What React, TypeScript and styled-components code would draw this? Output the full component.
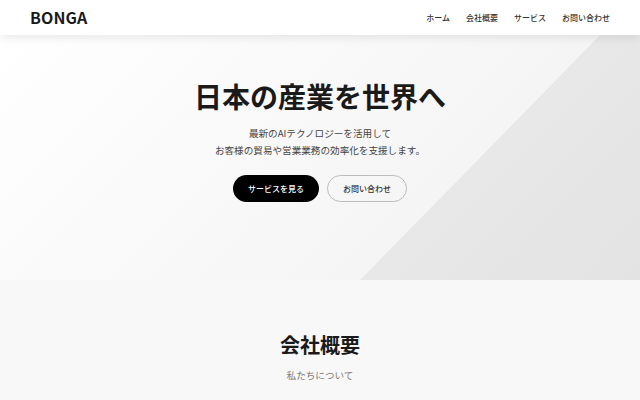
import styled, { createGlobalStyle } from "styled-components";

const GlobalStyle = createGlobalStyle`
  * { box-sizing: border-box; margin: 0; padding: 0; }
  html, body { background: #f8f8f8; overflow: hidden; }
  body { font-family: "Noto Sans CJK JP", "Noto Sans", sans-serif; color: #1a1a1a; }
`;

const Page = styled.div`
  width: 640px;
  height: 400px;
  overflow: hidden;
`;

const Header = styled.header`
  position: relative;
  z-index: 2;
  height: 35px;
  padding: 0 30px;
  display: flex;
  align-items: center;
  justify-content: space-between;
  background: #fff;
  box-shadow: 0 2px 10px rgba(0, 0, 0, 0.1);
`;

const Logo = styled.div`
  font-size: 16px;
  font-weight: 700;
  letter-spacing: 0.1px;
  margin-top: -2px;
`;

const Nav = styled.nav`
  display: flex;
  gap: 16px;
`;

const NavLink = styled.a`
  font-size: 8px;
  font-weight: 500;
  color: #333;
`;

const Hero = styled.section`
  position: relative;
  height: 245px;
  display: flex;
  flex-direction: column;
  align-items: center;
  background: linear-gradient(135deg, #ffffff 0%, #f0f0f0 100%);
  overflow: hidden;

  &::before {
    content: "";
    position: absolute;
    inset: 0;
    background: rgba(0, 0, 0, 0.05);
    clip-path: polygon(600px 0, 100% 0, 100% 100%, 360px 100%);
  }
`;

const HeroTitle = styled.h1`
  position: relative;
  margin-top: 37px;
  font-size: 28px;
  line-height: 48px;
  font-weight: 700;
  white-space: nowrap;
`;

const HeroText = styled.p`
  position: relative;
  margin-top: 5px;
  font-size: 9.6px;
  line-height: 17.3px;
  color: #444;
  text-align: center;
`;

const Buttons = styled.div`
  position: relative;
  margin-top: 15px;
  display: flex;
  gap: 8px;
`;

const Button = styled.a<{ $primary?: boolean }>`
  width: ${(p) => (p.$primary ? "86px" : "80px")};
  height: 27px;
  display: flex;
  align-items: center;
  justify-content: center;
  border-radius: 14px;
  font-size: 8px;
  font-weight: 500;
  color: ${(p) => (p.$primary ? "#fff" : "#333")};
  background: ${(p) => (p.$primary ? "#000" : "transparent")};
  border: ${(p) => (p.$primary ? "none" : "1px solid #bbb")};
`;

const About = styled.section`
  height: 120px;
  padding-top: 48px;
  display: flex;
  flex-direction: column;
  align-items: center;
  background: #f8f8f8;
`;

const SectionTitle = styled.h2`
  font-size: 20px;
  line-height: 34px;
  font-weight: 700;
`;

const SectionSub = styled.p`
  margin-top: 5px;
  font-size: 9.6px;
  line-height: 16px;
  color: #7a7a7a;
`;

export default function App() {
  return (
    <Page>
      <GlobalStyle />
      <Header>
        <Logo>BONGA</Logo>
        <Nav>
          <NavLink>ホーム</NavLink>
          <NavLink>会社概要</NavLink>
          <NavLink>サービス</NavLink>
          <NavLink>お問い合わせ</NavLink>
        </Nav>
      </Header>
      <Hero>
        <HeroTitle>日本の産業を世界へ</HeroTitle>
        <HeroText>
          最新のAIテクノロジーを活用して
          <br />
          お客様の貿易や営業業務の効率化を支援します。
        </HeroText>
        <Buttons>
          <Button $primary>サービスを見る</Button>
          <Button>お問い合わせ</Button>
        </Buttons>
      </Hero>
      <About>
        <SectionTitle>会社概要</SectionTitle>
        <SectionSub>私たちについて</SectionSub>
      </About>
    </Page>
  );
}
